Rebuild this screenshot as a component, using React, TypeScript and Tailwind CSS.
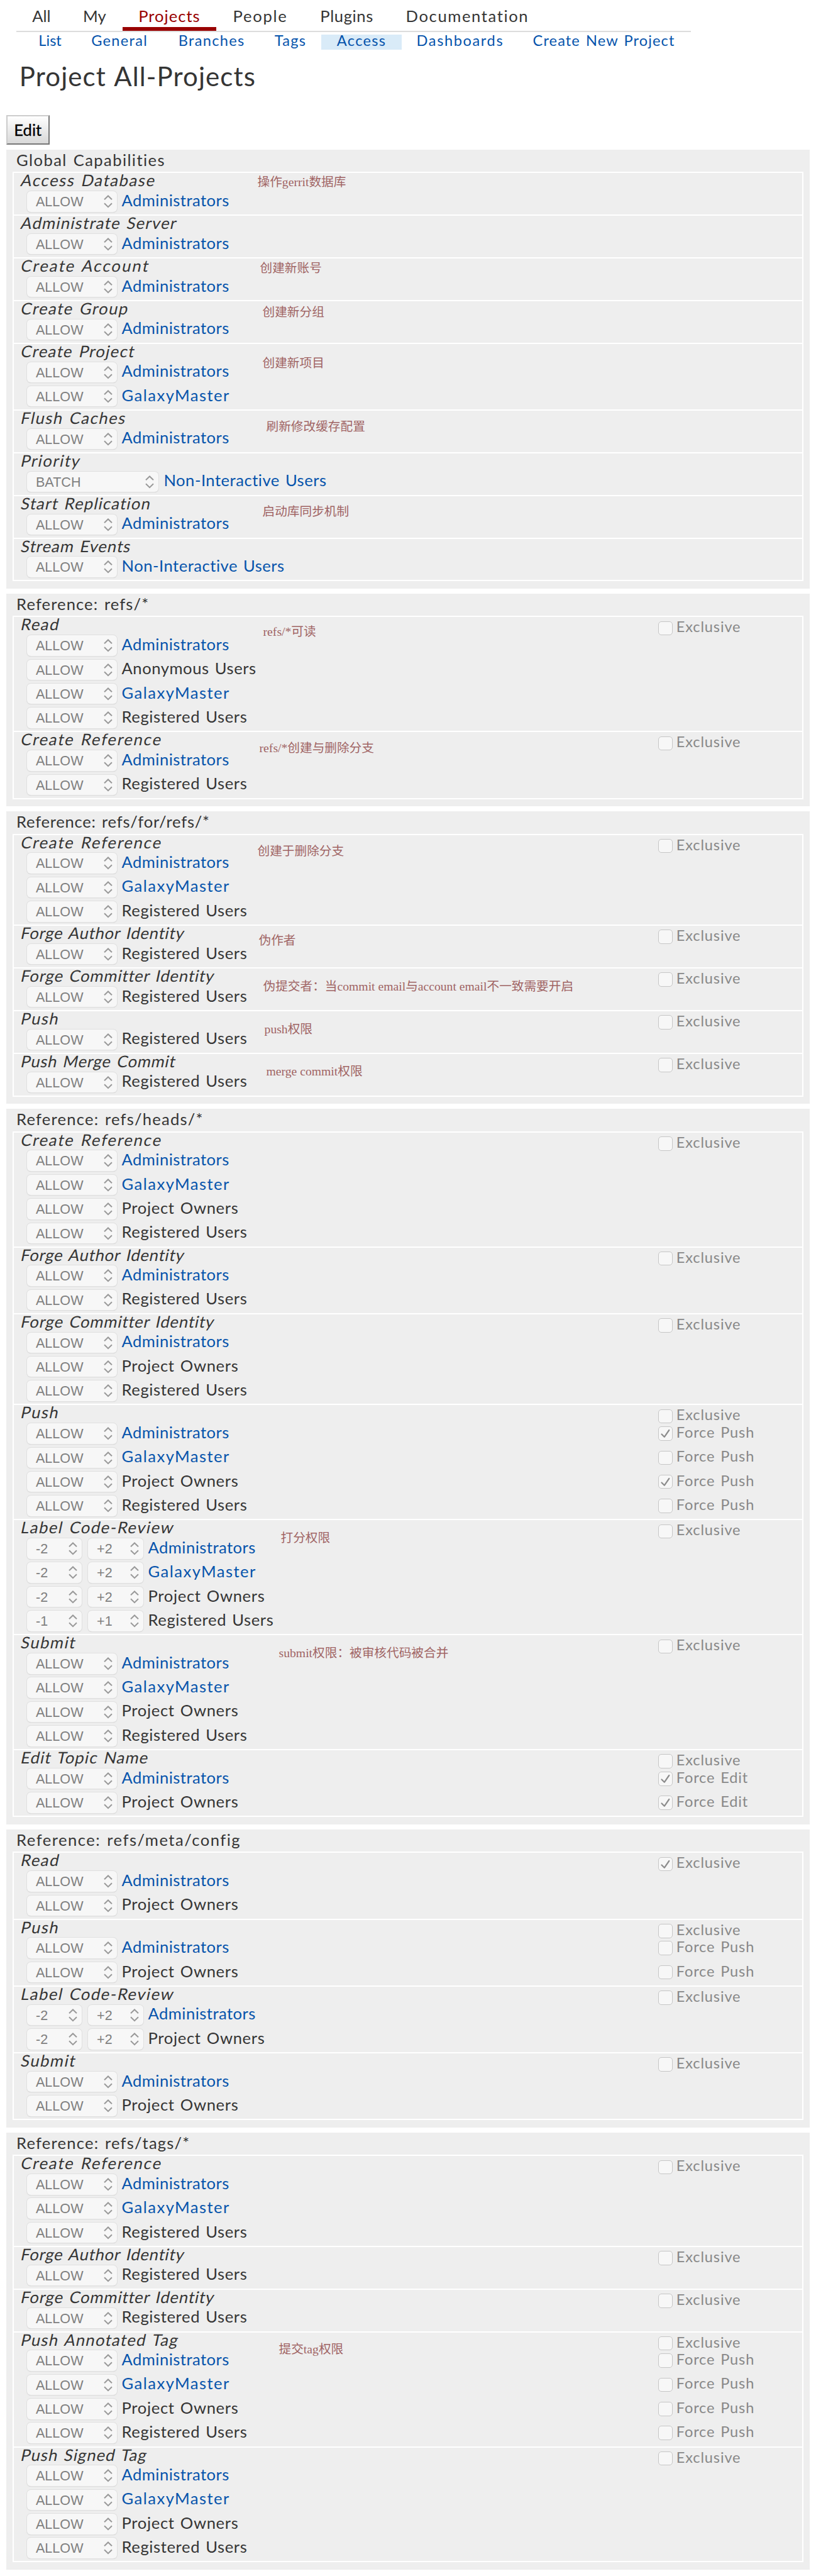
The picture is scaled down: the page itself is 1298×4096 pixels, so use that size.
import React from "react";
import clsx from "clsx";

type Rule = {
  group: string;
  action?: string;
  range?: [string, string];
  force?: string;
  forced?: boolean;
};

type Permission = {
  name: string;
  exclusive?: boolean;
  rules: Rule[];
  note?: { text: string; left: number; top: number };
};

type AccessSection = {
  title: string;
  tracking: string;
  permissions: Permission[];
};

const App = () => {
  return (
    <div className="w-full h-[4096px] bg-white px-[9.8px] overflow-hidden font-[Lato,'Noto_Sans_CJK_SC',sans-serif] text-[#353535] [word-spacing:2px]">
      <TopMenu />
      <SubMenu />
      <h1 className="pl-[21px] h-[104.2px] text-[42px] leading-[84.5px] tracking-[1.1px]">
        Project All-Projects
      </h1>
      <button className="block w-[69px] h-[47.2px] border-2 border-t-[#ccc] border-l-[#ccc] border-r-[#777] border-b-[#777] bg-gradient-to-b from-white to-[#d8d8d8] text-black text-[25.6px] leading-[42px] [-webkit-text-stroke:0.3px_black]">
        Edit
      </button>
      <main className="flex flex-col gap-[7.87px] mt-[7.9px]">
        {sections.map((section) => (
          <SectionPanel key={section.title} section={section} />
        ))}
      </main>
    </div>
  );
};

export default App;

const TopMenu = () => (
  <nav className="flex ml-[15.8px] w-[1073.8px] h-[51.2px] bg-[linear-gradient(#ddd,#ddd)] bg-bottom bg-no-repeat bg-[length:100%_2px] text-[25.6px] leading-[51px] text-center">
    {tabs.map((tab) => (
      <a
        key={tab.label}
        className={clsx(
          "h-[49.2px] whitespace-nowrap border-b-[6px]",
          tab.width,
          tab.label === "Projects"
            ? "border-[#990000] text-[#990000]"
            : "border-transparent"
        )}
      >
        {tab.label}
      </a>
    ))}
  </nav>
);

const SubMenu = () => (
  <nav className="flex ml-[29.5px] mt-[3.9px] text-[23.6px] leading-[19.4px] tracking-[1.3px] text-center text-[#0654ac]">
    {links.map((link) => (
      <a
        key={link.label}
        className={clsx(
          "h-[23.6px] whitespace-nowrap",
          link.width,
          link.label === "Access" && "bg-[#d9ebf8]"
        )}
      >
        {link.label}
      </a>
    ))}
  </nav>
);

const SectionPanel = ({ section }: { section: AccessSection }) => (
  <section className="bg-[#eee] px-[9.8px] pb-[11.8px]">
    <h2
      className={clsx(
        "h-[35.4px] pl-[6.5px] text-[25.6px] leading-[33px]",
        section.tracking
      )}
    >
      {section.title}
    </h2>
    <div className="flex flex-col gap-[1.97px] bg-white p-[1.97px]">
      {section.permissions.map((permission) => (
        <PermissionBox key={permission.name} permission={permission} />
      ))}
    </div>
  </section>
);

const PermissionBox = ({ permission }: { permission: Permission }) => {
  const { name, exclusive, rules, note } = permission;
  return (
    <div className="relative bg-[#eee] text-[25.6px]">
      <div className="flex h-[27.54px]">
        <h3
          className={clsx(
            "w-[1025.6px] pl-[12px] leading-[22px]",
            nameTracking[name] ?? "tracking-[1.5px]"
          )}
        >
          <span className="inline-block -skew-x-12">{name}</span>
        </h3>
        {exclusive !== undefined && (
          <Check label="Exclusive" checked={exclusive} />
        )}
      </div>
      {rules.map((rule) => (
        <div key={rule.group} className="flex h-[38.37px]">
          <div className="flex w-[1025.6px] pl-[21.4px]">
            {rule.range ? (
              <div className="flex gap-[9.6px]">
                <Select value={rule.range[0]} width="w-[87.5px]" />
                <Select value={rule.range[1]} width="w-[87.5px]" />
              </div>
            ) : (
              <Select
                value={rule.action ?? "ALLOW"}
                width={rule.action ? "w-[209.5px]" : "w-[142.6px]"}
              />
            )}
            <span
              className={clsx(
                "pl-[8px] leading-[30px]",
                linked.includes(rule.group) && "text-[#0654ac]",
                groupTracking[rule.group]
              )}
            >
              {rule.group}
            </span>
          </div>
          {rule.force && <Check label={rule.force} checked={rule.forced} />}
        </div>
      ))}
      {note && (
        <span
          className="absolute -translate-y-1/2 whitespace-nowrap font-['Liberation_Serif','Noto_Sans_CJK_SC',serif] text-[19.67px] leading-5 text-[#a06464] [word-spacing:0]"
          style={{ left: note.left, top: note.top }}
        >
          {note.text}
        </span>
      )}
    </div>
  );
};

const Select = ({ value, width }: { value: string; width: string }) => (
  <div
    className={clsx(
      "flex justify-between mt-[1.3px] h-[32.5px] pl-[14px] pr-[7px] rounded-[6px] bg-[#f7f7f7] shadow-[0_0_0_1px_#e0e0e0,0_1px_1px_#bbb]",
      "font-['Liberation_Sans',sans-serif] text-[21.6px] leading-[33px] text-[#808080]",
      width
    )}
  >
    {value}
    <svg
      className="mt-[6px]"
      width="14"
      height="21"
      viewBox="0 0 14 21"
      fill="none"
      stroke="#999"
      strokeWidth="2"
    >
      <path d="M1 7.3 7 1.5 13 7.3M1 13.3 7 19.1 13 13.3" />
    </svg>
  </div>
);

const Check = ({ label, checked }: { label: string; checked?: boolean }) => (
  <div className="flex text-[23.6px] leading-[31.8px] tracking-[0.85px] text-[#888]">
    <span className="mt-[6.3px] w-[22.6px] h-[22.6px] rounded-[5px] border border-[#c6c6c6] bg-[#f7f7f7]">
      {checked && (
        <svg
          width="20"
          height="20"
          viewBox="0 0 20 20"
          fill="none"
          stroke="#8c8c8c"
          strokeWidth="2.2"
          strokeLinecap="round"
          strokeLinejoin="round"
        >
          <path d="M4.5 11.5 8.8 15.8 16.3 5" />
        </svg>
      )}
    </span>
    <span className="pl-[6px]">{label}</span>
  </div>
);

const tabs = [
  { label: "All", width: "w-[80.6px]" },
  { label: "My", width: "w-[88.5px]" },
  { label: "Projects", width: "w-[149.5px] tracking-[1px]" },
  { label: "People", width: "w-[139.6px] tracking-[1.7px]" },
  { label: "Plugins", width: "w-[135.7px] tracking-[0.6px]" },
  { label: "Documentation", width: "w-[247.8px] tracking-[1.6px]" },
];

const links = [
  { label: "List", width: "w-[80.6px] tracking-[0px]" },
  { label: "General", width: "w-[140.6px]" },
  { label: "Branches", width: "w-[152.4px]" },
  { label: "Tags", width: "w-[98.3px]" },
  { label: "Access", width: "w-[127.8px]" },
  { label: "Dashboards", width: "w-[185.9px] tracking-[1.6px]" },
  { label: "Create New Project", width: "w-[271.4px] tracking-[1.1px]" },
];

// groups that have their own page
const linked = ["Administrators", "GalaxyMaster", "Non-Interactive Users"];

const groupTracking: Record<string, string> = {
  Administrators: "tracking-[0.45px]",
  GalaxyMaster: "tracking-[1.45px]",
  "Project Owners": "tracking-[0.65px]",
  "Registered Users": "tracking-[0.6px]",
  "Anonymous Users": "tracking-[0.55px]",
  "Non-Interactive Users": "tracking-[0.5px]",
};

const nameTracking: Record<string, string> = {
  "Access Database": "tracking-[1.6px]",
  "Administrate Server": "tracking-[1.25px]",
  "Create Account": "tracking-[2.1px]",
  "Create Reference": "tracking-[1.8px]",
  "Create Project": "tracking-[1.35px]",
  "Start Replication": "tracking-[1.2px]",
  "Stream Events": "tracking-[1px]",
  "Forge Author Identity": "tracking-[0.75px]",
  "Forge Committer Identity": "tracking-[0.85px]",
  "Push Merge Commit": "tracking-[0.75px]",
  "Edit Topic Name": "tracking-[1.15px]",
  "Push Annotated Tag": "tracking-[1.3px]",
  "Push Signed Tag": "tracking-[1.05px]",
};

const admins = { group: "Administrators" };
const galaxy = { group: "GalaxyMaster" };
const owners = { group: "Project Owners" };
const registered = { group: "Registered Users" };
const bots = { group: "Non-Interactive Users" };

const sections: AccessSection[] = [
  {
    title: "Global Capabilities",
    tracking: "tracking-[1.4px]",
    permissions: [
      {
        name: "Access Database",
        rules: [admins],
        note: { text: "操作gerrit数据库", left: 388, top: 14 },
      },
      { name: "Administrate Server", rules: [admins] },
      {
        name: "Create Account",
        rules: [admins],
        note: { text: "创建新账号", left: 392, top: 15 },
      },
      {
        name: "Create Group",
        rules: [admins],
        note: { text: "创建新分组", left: 396, top: 17 },
      },
      {
        name: "Create Project",
        rules: [admins, galaxy],
        note: { text: "创建新项目", left: 396, top: 30 },
      },
      {
        name: "Flush Caches",
        rules: [admins],
        note: { text: "刷新修改缓存配置", left: 402, top: 25 },
      },
      { name: "Priority", rules: [{ ...bots, action: "BATCH" }] },
      {
        name: "Start Replication",
        rules: [admins],
        note: { text: "启动库同步机制", left: 396, top: 24 },
      },
      { name: "Stream Events", rules: [bots] },
    ],
  },
  {
    title: "Reference: refs/*",
    tracking: "tracking-[1.1px]",
    permissions: [
      {
        name: "Read",
        exclusive: false,
        rules: [admins, { group: "Anonymous Users" }, galaxy, registered],
        note: { text: "refs/*可读", left: 397, top: 23 },
      },
      {
        name: "Create Reference",
        exclusive: false,
        rules: [admins, registered],
        note: { text: "refs/*创建与删除分支", left: 391, top: 25 },
      },
    ],
  },
  {
    title: "Reference: refs/for/refs/*",
    tracking: "tracking-[0.75px]",
    permissions: [
      {
        name: "Create Reference",
        exclusive: false,
        rules: [admins, galaxy, registered],
        note: { text: "创建于删除分支", left: 388, top: 25 },
      },
      {
        name: "Forge Author Identity",
        exclusive: false,
        rules: [registered],
        note: { text: "伪作者", left: 390, top: 23 },
      },
      {
        name: "Forge Committer Identity",
        exclusive: false,
        rules: [registered],
        note: {
          text: "伪提交者：当commit email与account email不一致需要开启",
          left: 397,
          top: 28,
        },
      },
      {
        name: "Push",
        exclusive: false,
        rules: [registered],
        note: { text: "push权限", left: 399, top: 28 },
      },
      {
        name: "Push Merge Commit",
        exclusive: false,
        rules: [registered],
        note: { text: "merge commit权限", left: 402, top: 27 },
      },
    ],
  },
  {
    title: "Reference: refs/heads/*",
    tracking: "tracking-[1.2px]",
    permissions: [
      {
        name: "Create Reference",
        exclusive: false,
        rules: [admins, galaxy, owners, registered],
      },
      {
        name: "Forge Author Identity",
        exclusive: false,
        rules: [admins, registered],
      },
      {
        name: "Forge Committer Identity",
        exclusive: false,
        rules: [admins, owners, registered],
      },
      {
        name: "Push",
        exclusive: false,
        rules: [
          { ...admins, force: "Force Push", forced: true },
          { ...galaxy, force: "Force Push" },
          { ...owners, force: "Force Push", forced: true },
          { ...registered, force: "Force Push" },
        ],
      },
      {
        name: "Label Code-Review",
        exclusive: false,
        rules: [
          { ...admins, range: ["-2", "+2"] },
          { ...galaxy, range: ["-2", "+2"] },
          { ...owners, range: ["-2", "+2"] },
          { ...registered, range: ["-1", "+1"] },
        ],
        note: { text: "打分权限", left: 425, top: 28 },
      },
      {
        name: "Submit",
        exclusive: false,
        rules: [admins, galaxy, owners, registered],
        note: { text: "submit权限：被审核代码被合并", left: 422, top: 28 },
      },
      {
        name: "Edit Topic Name",
        exclusive: false,
        rules: [
          { ...admins, force: "Force Edit", forced: true },
          { ...owners, force: "Force Edit", forced: true },
        ],
      },
    ],
  },
  {
    title: "Reference: refs/meta/config",
    tracking: "tracking-[1.5px]",
    permissions: [
      { name: "Read", exclusive: true, rules: [admins, owners] },
      {
        name: "Push",
        exclusive: false,
        rules: [
          { ...admins, force: "Force Push" },
          { ...owners, force: "Force Push" },
        ],
      },
      {
        name: "Label Code-Review",
        exclusive: false,
        rules: [
          { ...admins, range: ["-2", "+2"] },
          { ...owners, range: ["-2", "+2"] },
        ],
      },
      { name: "Submit", exclusive: false, rules: [admins, owners] },
    ],
  },
  {
    title: "Reference: refs/tags/*",
    tracking: "tracking-[1.2px]",
    permissions: [
      {
        name: "Create Reference",
        exclusive: false,
        rules: [admins, galaxy, registered],
      },
      {
        name: "Forge Author Identity",
        exclusive: false,
        rules: [registered],
      },
      {
        name: "Forge Committer Identity",
        exclusive: false,
        rules: [registered],
      },
      {
        name: "Push Annotated Tag",
        exclusive: false,
        rules: [
          { ...admins, force: "Force Push" },
          { ...galaxy, force: "Force Push" },
          { ...owners, force: "Force Push" },
          { ...registered, force: "Force Push" },
        ],
        note: { text: "提交tag权限", left: 422, top: 26 },
      },
      {
        name: "Push Signed Tag",
        exclusive: false,
        rules: [admins, galaxy, owners, registered],
      },
    ],
  },
];
